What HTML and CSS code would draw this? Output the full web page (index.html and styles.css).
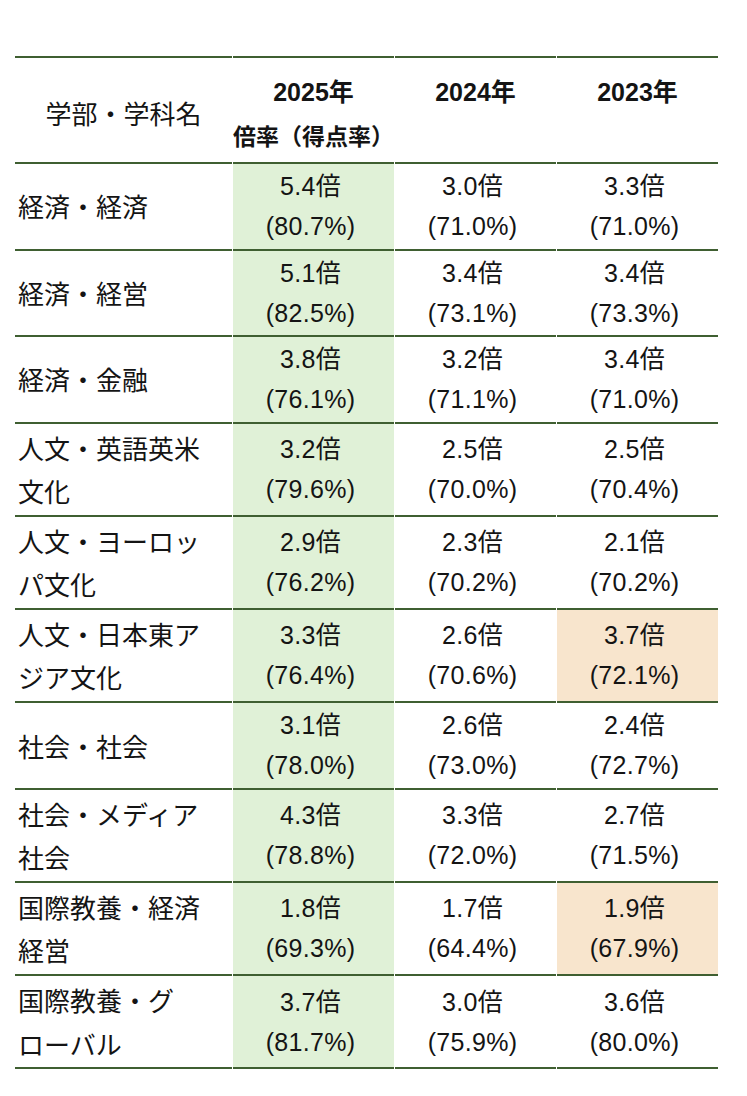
FILE: index.html
```html
<!DOCTYPE html>
<html lang="ja">
<head>
<meta charset="utf-8">
<title>倍率表</title>
<link rel="stylesheet" href="styles.css">
</head>
<body>
<table class="rates">
  <colgroup>
    <col class="c-name">
    <col class="c-year">
    <col class="c-year">
    <col class="c-year">
  </colgroup>
  <thead>
    <tr>
      <th class="h-name">学部・学科名</th>
      <th class="h-year"><div class="yr">2025年</div><div class="sub">倍率（得点率）</div></th>
      <th class="h-year"><div class="yr">2024年</div></th>
      <th class="h-year"><div class="yr">2023年</div></th>
    </tr>
  </thead>
  <tbody>
    <tr><td class="name">経済・経済</td><td class="num hl-green">5.4倍<br>(80.7%)</td><td class="num">3.0倍<br>(71.0%)</td><td class="num">3.3倍<br>(71.0%)</td></tr>
    <tr><td class="name">経済・経営</td><td class="num hl-green">5.1倍<br>(82.5%)</td><td class="num">3.4倍<br>(73.1%)</td><td class="num">3.4倍<br>(73.3%)</td></tr>
    <tr><td class="name">経済・金融</td><td class="num hl-green">3.8倍<br>(76.1%)</td><td class="num">3.2倍<br>(71.1%)</td><td class="num">3.4倍<br>(71.0%)</td></tr>
    <tr><td class="name">人文・英語英米文化</td><td class="num hl-green">3.2倍<br>(79.6%)</td><td class="num">2.5倍<br>(70.0%)</td><td class="num">2.5倍<br>(70.4%)</td></tr>
    <tr><td class="name">人文・ヨーロッパ文化</td><td class="num hl-green">2.9倍<br>(76.2%)</td><td class="num">2.3倍<br>(70.2%)</td><td class="num">2.1倍<br>(70.2%)</td></tr>
    <tr><td class="name">人文・日本東アジア文化</td><td class="num hl-green">3.3倍<br>(76.4%)</td><td class="num">2.6倍<br>(70.6%)</td><td class="num hl-orange">3.7倍<br>(72.1%)</td></tr>
    <tr><td class="name">社会・社会</td><td class="num hl-green">3.1倍<br>(78.0%)</td><td class="num">2.6倍<br>(73.0%)</td><td class="num">2.4倍<br>(72.7%)</td></tr>
    <tr><td class="name">社会・メディア社会</td><td class="num hl-green">4.3倍<br>(78.8%)</td><td class="num">3.3倍<br>(72.0%)</td><td class="num">2.7倍<br>(71.5%)</td></tr>
    <tr><td class="name">国際教養・経済経営</td><td class="num hl-green">1.8倍<br>(69.3%)</td><td class="num">1.7倍<br>(64.4%)</td><td class="num hl-orange">1.9倍<br>(67.9%)</td></tr>
    <tr><td class="name">国際教養・グローバル</td><td class="num hl-green">3.7倍<br>(81.7%)</td><td class="num">3.0倍<br>(75.9%)</td><td class="num">3.6倍<br>(80.0%)</td></tr>
  </tbody>
</table>
</body>
</html>
```
FILE: styles.css
```css
html, body {
  margin: 0;
  padding: 0;
  background: #ffffff;
}

body {
  padding: 56px 0 0 14px;
  font-family: "Liberation Sans", "Noto Sans CJK JP", sans-serif;
  color: #141414;
}

.rates {
  border-collapse: separate;
  border-spacing: 1px 0;
  table-layout: fixed;
  width: 705px;
}

.c-name { width: 217px; }
.c-year { width: 161px; }

.rates th,
.rates td {
  padding: 0;
  border-bottom: 2px solid #3f5f31;
}

.rates thead th {
  border-top: 2px solid #3f5f31;
}

.h-name {
  font-family: "Noto Sans CJK JP", sans-serif;
  font-weight: 400;
  font-size: 26px;
  text-align: center;
  vertical-align: middle;
  padding: 4px 0 0 !important;
}

.h-year {
  vertical-align: top;
  text-align: center;
  padding: 14px 0 3px !important;
  font-weight: 700;
}

.yr {
  font-size: 25px;
  line-height: 40px;
}

.sub {
  font-size: 23px;
  line-height: 44px;
  margin-top: 3px;
  white-space: nowrap;
}

.name {
  font-family: "Noto Sans CJK JP", sans-serif;
  font-size: 26px;
  line-height: 43.6px;
  text-align: left;
  vertical-align: middle;
  padding: 2px 18px 2px 3px !important;
  line-break: strict;
}

.num {
  font-size: 25px;
  line-height: 40px;
  letter-spacing: 0.3px;
  text-align: center;
  vertical-align: middle;
  padding: 2.25px 6px 2.25px 0 !important;
}

.hl-green { background: #e0f1d7; }
.hl-orange { background: #f8e5cd; }
```
